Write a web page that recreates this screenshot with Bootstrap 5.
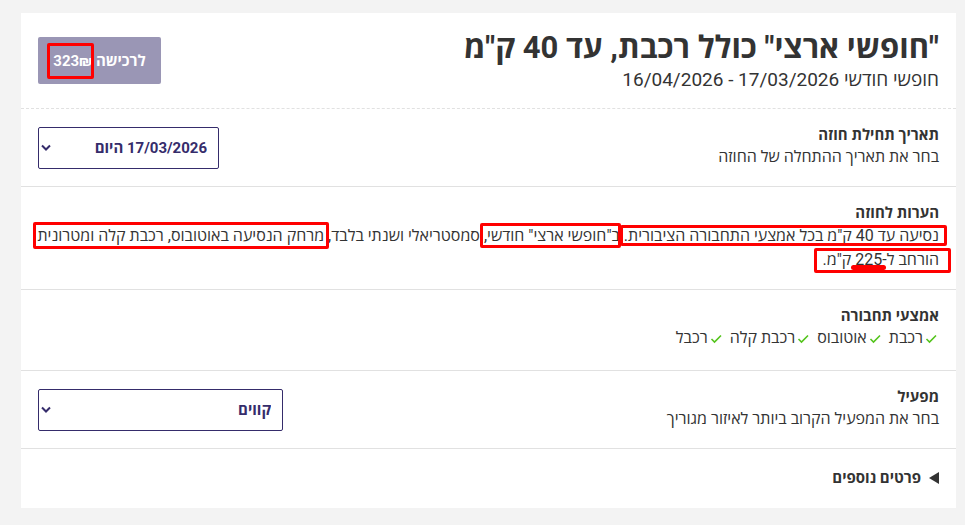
<!DOCTYPE html>
<html lang="he" dir="rtl">
<head>
<meta charset="utf-8">
<meta name="viewport" content="width=device-width, initial-scale=1">
<title>חופשי ארצי</title>
<link href="https://cdn.jsdelivr.net/npm/bootstrap@5.3.0/dist/css/bootstrap.min.css" rel="stylesheet">
<style>
  body { background: #f3f3f3; color: #333; font-family: Roboto, "Open Sans", "Liberation Sans", sans-serif; font-size: 16px; line-height: 22px; padding: 13px 9px 17px 21px; }
  .contract > * { padding: 15px 17px 17px; border-bottom: 1px solid #e1e1e1; }
  .contract > *:last-child { border-bottom: 0; }
  .contract > header { padding: 16px 17px; border-bottom-style: dashed; }
  h1 { font-size: 31px; line-height: 38px; }
  h2, .heading { font-size: 15px; line-height: 22px; font-weight: 700; margin: 0; }
  .period { font-size: 19px; line-height: 25px; }
  .buy { background: #9a96b5; color: #fff; font-weight: 700; border: 0; border-radius: 2px; height: 47px; width: 123px; margin-top: 8px; padding: 0; font-size: 15px; }
  .picker { appearance: none; background: #fff; color: #352c6b; border: 1px solid #352c6b; border-radius: 2px; font-size: 15px; font-weight: 700; height: 42px; width: 100%; padding: 0 11px; }
  .field { width: 181px; margin-top: 3px; }
  .field.wide { width: 245px; }
  .chevron { top: 17px; left: 3px; pointer-events: none; }
  .notes { line-height: 24px; }
  .contract > .remarks { padding-left: 14px; }
  .contract > .modes { padding-bottom: 21px; }
  .contract > details { padding: 18px 17px 19px; }
  .modes ul { column-gap: 6px; }
  summary { list-style: none; }
  .ring { position: relative; }
  .ring::after { content: ""; position: absolute; inset: -2px; border: 3px solid #f00; border-radius: 2px; pointer-events: none; }
  .ring.price::after { inset: -9px -2px -9px -6px; }
  .ring.ride::after { inset: -1px -8px -1px -4px; }
  .ring.plan::after { inset: -3px -1px -3px -4px; }
  .ring.range::after { inset: -4px -5px -4px -4px; }
  .ring.extended::after { inset: -2px -12px -4px -9px; }
  .stroke { position: relative; }
  .stroke::after { content: ""; position: absolute; left: -4px; right: -4px; bottom: -1px; height: 5px; border-radius: 3px; background: #f00; }
</style>
<script src="https://cdn.jsdelivr.net/npm/bootstrap@5.3.0/dist/js/bootstrap.bundle.min.js"></script>
</head>
<body>
<main class="contract bg-white">
  <header class="d-flex justify-content-between align-items-start">
    <div>
      <h1 class="fw-bold m-0">"חופשי ארצי" כולל רכבת, עד 40 ק"מ</h1>
      <div class="period">חופשי חודשי 17/03/2026 - 16/04/2026</div>
    </div>
    <button type="button" class="buy">לרכישה <span class="ring price">323₪</span></button>
  </header>

  <section class="d-flex justify-content-between align-items-start">
    <div>
      <h2><label for="start">תאריך תחילת חוזה</label></h2>
      <div>בחר את תאריך ההתחלה של החוזה</div>
    </div>
    <div class="field position-relative">
      <select id="start" class="picker d-block"><option>17/03/2026 היום</option></select>
      <svg class="chevron position-absolute" width="10" height="8" viewBox="0 0 10 8" fill="none" stroke="#352c6b" stroke-width="2"><path d="M1 1.5 5 5.5 9 1.5"/></svg>
    </div>
  </section>

  <section class="remarks">
    <h2>הערות לחוזה</h2>
    <p class="notes m-0"><span class="ring ride">נסיעה עד 40 ק"מ בכל אמצעי התחבורה הציבורית.</span> <span class="ring plan">ב"חופשי ארצי" חודשי,</span> סמסטריאלי ושנתי בלבד, <span class="ring range">מרחק הנסיעה באוטובוס, רכבת קלה ומטרונית</span> <span class="ring extended">הורחב ל-<span class="stroke">225</span> ק"מ.</span></p>
  </section>

  <section class="modes">
    <h2>אמצעי תחבורה</h2>
    <ul class="list-unstyled d-flex flex-wrap p-0 m-0">
      <li class="d-flex align-items-center"><svg width="16" height="12" viewBox="0 0 16 12" fill="none" stroke="#54c41c" stroke-width="1.6"><path d="M3.5 7 6.5 10 13 3.5"/></svg><span>רכבת</span></li>
      <li class="d-flex align-items-center"><svg width="16" height="12" viewBox="0 0 16 12" fill="none" stroke="#54c41c" stroke-width="1.6"><path d="M3.5 7 6.5 10 13 3.5"/></svg><span>אוטובוס</span></li>
      <li class="d-flex align-items-center"><svg width="16" height="12" viewBox="0 0 16 12" fill="none" stroke="#54c41c" stroke-width="1.6"><path d="M3.5 7 6.5 10 13 3.5"/></svg><span>רכבת קלה</span></li>
      <li class="d-flex align-items-center"><svg width="16" height="12" viewBox="0 0 16 12" fill="none" stroke="#54c41c" stroke-width="1.6"><path d="M3.5 7 6.5 10 13 3.5"/></svg><span>רכבל</span></li>
    </ul>
  </section>

  <section class="d-flex justify-content-between align-items-start">
    <div>
      <h2><label for="operator">מפעיל</label></h2>
      <div>בחר את המפעיל הקרוב ביותר לאיזור מגוריך</div>
    </div>
    <div class="field wide position-relative">
      <select id="operator" class="picker d-block"><option>קווים</option></select>
      <svg class="chevron position-absolute" width="10" height="8" viewBox="0 0 10 8" fill="none" stroke="#352c6b" stroke-width="2"><path d="M1 1.5 5 5.5 9 1.5"/></svg>
    </div>
  </section>

  <details>
    <summary class="heading d-flex align-items-center gap-2"><svg width="10" height="12" viewBox="0 0 10 12"><path d="M10 0v12L0 6z" fill="#333"/></svg>פרטים נוספים</summary>
  </details>
</main>
</body>
</html>
